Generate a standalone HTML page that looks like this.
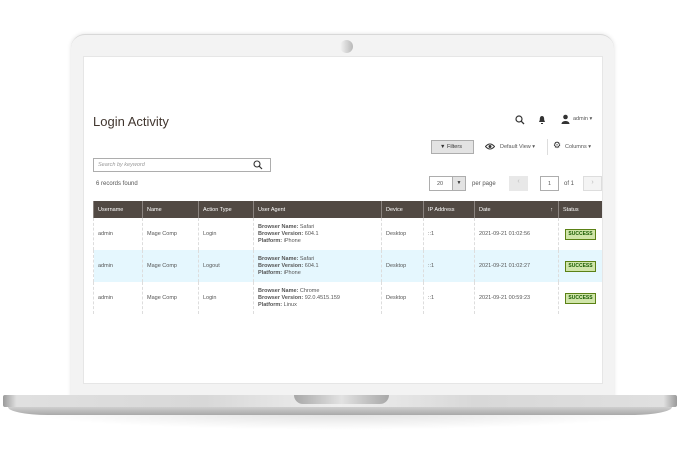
<!DOCTYPE html>
<html><head><style>
*{margin:0;padding:0;box-sizing:border-box}
body{width:680px;height:450px;background:#fff;position:relative;overflow:hidden;font-family:"Liberation Sans",sans-serif;color:#333}
.abs{position:absolute}
.lid{left:71px;top:34px;width:543px;height:364px;background:#f3f3f3;border-radius:14px 14px 0 0;box-shadow:0 0 4px rgba(0,0,0,.12);border-top:1px solid #d8d8d8}
.screen{left:83px;top:56px;width:520px;height:328px;background:#fff;border:1px solid #e6e6e6}
.cam{left:340px;top:40px;width:13px;height:13px;border-radius:50%;background:linear-gradient(90deg,#f4f4f4,#b8b8b8)}
.base{left:3px;top:395px;width:674px;height:12px;background:linear-gradient(90deg,#9a9a9a 0,#e0e0e0 2%,#d8d8d8 30%,#efefef 50%,#d8d8d8 70%,#e0e0e0 98%,#9a9a9a 100%);border-radius:2px}
.base2{left:8px;top:407px;width:664px;height:8px;background:linear-gradient(#cfcfcf,#a9a9a9);border-radius:0 0 40px 40px/0 0 8px 8px}
.shadow{left:20px;top:412px;width:640px;height:18px;background:radial-gradient(ellipse at center top,rgba(0,0,0,.13),rgba(0,0,0,0) 70%)}
.notch{left:294px;top:395px;width:95px;height:9px;border-radius:0 0 9px 9px;background:linear-gradient(90deg,#a8a8a8,#e2e2e2 50%,#a8a8a8)}
.t{font-size:6px;color:#555}
table{border-collapse:collapse;font-size:5.5px}
th{background:#514943;color:#fff;text-align:left;font-weight:normal;height:17px;padding-left:4px;border-left:1px solid #8a837f}
td{height:32px;padding-left:4px;color:#555;border-left:1px dashed #ddd;vertical-align:middle;line-height:7px}
tr.b td{background:#e5f7fe}
.ok{display:inline-block;background:#d0e5a9;border:1px solid #5b8116;color:#185b00;font-weight:bold;font-size:5px;padding:1px 2px}
</style></head><body>
<div class="abs shadow"></div>
<div class="abs lid"></div>
<div class="abs cam"></div>
<div class="abs screen"></div>
<div class="abs base"></div>
<div class="abs base2"></div>
<div class="abs notch"></div>

<div class="abs" style="left:93px;top:114px;font-size:13px;color:#41362f">Login Activity</div>
<svg class="abs" style="left:515px;top:115px" width="10" height="10" viewBox="0 0 10 10"><circle cx="4" cy="4" r="3" fill="none" stroke="#333" stroke-width="1.2"/><path d="M6.2 6.2L9 9" stroke="#333" stroke-width="1.3"/></svg>
<svg class="abs" style="left:538px;top:115px" width="8" height="10" viewBox="0 0 8 10"><path d="M4 1C2 1 1.8 3 1.8 5L1 7h6L6.2 5C6.2 3 6 1 4 1z M3 8h2v1H3z" fill="#333"/></svg>
<svg class="abs" style="left:561px;top:114px" width="9" height="10" viewBox="0 0 9 10"><circle cx="4.5" cy="3" r="2.3" fill="#333"/><path d="M0.5 10C0.5 6 8.5 6 8.5 10z" fill="#333"/></svg>
<div class="abs t" style="left:573px;top:116px;font-size:5.5px">admin ▾</div>

<div class="abs" style="left:431px;top:140px;width:43px;height:14px;background:#e3e3e3;border:1px solid #adadad;font-size:5.5px;color:#333;padding:3px 0 0 8px">▼ Filters</div>
<svg class="abs" style="left:485px;top:143px" width="10" height="7" viewBox="0 0 10 7"><path d="M0.5 3.5Q5 -1.5 9.5 3.5Q5 8.5 0.5 3.5z" fill="none" stroke="#333"/><circle cx="5" cy="3.5" r="1.5" fill="#333"/></svg>
<div class="abs t" style="left:500px;top:144px;font-size:5.5px">Default View ▾</div>
<div class="abs" style="left:547px;top:139px;width:1px;height:16px;background:#ddd"></div>
<div class="abs" style="left:553px;top:140px;font-size:9px;color:#333">⚙</div>
<div class="abs t" style="left:565px;top:144px;font-size:5.5px">Columns ▾</div>

<div class="abs" style="left:93px;top:158px;width:178px;height:14px;border:1px solid #adadad;font-size:5.5px;color:#999;font-style:italic;padding:3px 0 0 4px">Search by keyword</div>
<svg class="abs" style="left:253px;top:160px" width="10" height="10" viewBox="0 0 10 10"><circle cx="4" cy="4" r="3" fill="none" stroke="#333" stroke-width="1.1"/><path d="M6.2 6.2L9 9" stroke="#333" stroke-width="1.2"/></svg>
<div class="abs t" style="left:96px;top:181px">6 records found</div>

<div class="abs" style="left:429px;top:176px;width:37px;height:15px;border:1px solid #adadad;font-size:5.5px;padding:4px 0 0 7px;color:#555">20</div>
<div class="abs" style="left:452px;top:177px;width:13px;height:13px;background:#e3e3e3;border-left:1px solid #adadad;font-size:5px;text-align:center;padding-top:3px">▼</div>
<div class="abs t" style="left:472px;top:181px">per page</div>
<div class="abs" style="left:509px;top:176px;width:19px;height:15px;background:#e8e8e8;color:#bbb;font-size:7px;text-align:center;padding-top:2px">‹</div>
<div class="abs" style="left:540px;top:176px;width:19px;height:15px;border:1px solid #adadad;font-size:5.5px;text-align:center;padding-top:4px;color:#555">1</div>
<div class="abs t" style="left:564px;top:181px">of 1</div>
<div class="abs" style="left:583px;top:176px;width:19px;height:15px;border:1px solid #ddd;background:#f4f4f4;color:#bbb;font-size:7px;text-align:center;padding-top:2px">›</div>

<table class="abs" style="left:93px;top:201px;width:509px">
<tr><th style="width:49px">Username</th><th style="width:56px">Name</th><th style="width:55px">Action Type</th><th style="width:128px">User Agent</th><th style="width:42px">Device</th><th style="width:51px">IP Address</th><th style="width:84px">Date<span style="float:right;margin-right:5px">↑</span></th><th>Status</th></tr>
<tr><td>admin</td><td>Mage Comp</td><td>Login</td><td><b>Browser Name:</b> Safari<br><b>Browser Version:</b> 604.1<br><b>Platform:</b> iPhone</td><td>Desktop</td><td>::1</td><td>2021-09-21 01:02:56</td><td style="text-align:center;padding:0"><span class="ok">SUCCESS</span></td></tr>
<tr class="b"><td>admin</td><td>Mage Comp</td><td>Logout</td><td><b>Browser Name:</b> Safari<br><b>Browser Version:</b> 604.1<br><b>Platform:</b> iPhone</td><td>Desktop</td><td>::1</td><td>2021-09-21 01:02:27</td><td style="text-align:center;padding:0"><span class="ok">SUCCESS</span></td></tr>
<tr><td>admin</td><td>Mage Comp</td><td>Login</td><td><b>Browser Name:</b> Chrome<br><b>Browser Version:</b> 92.0.4515.159<br><b>Platform:</b> Linux</td><td>Desktop</td><td>::1</td><td>2021-09-21 00:59:23</td><td style="text-align:center;padding:0"><span class="ok">SUCCESS</span></td></tr>
</table>
</body></html>
